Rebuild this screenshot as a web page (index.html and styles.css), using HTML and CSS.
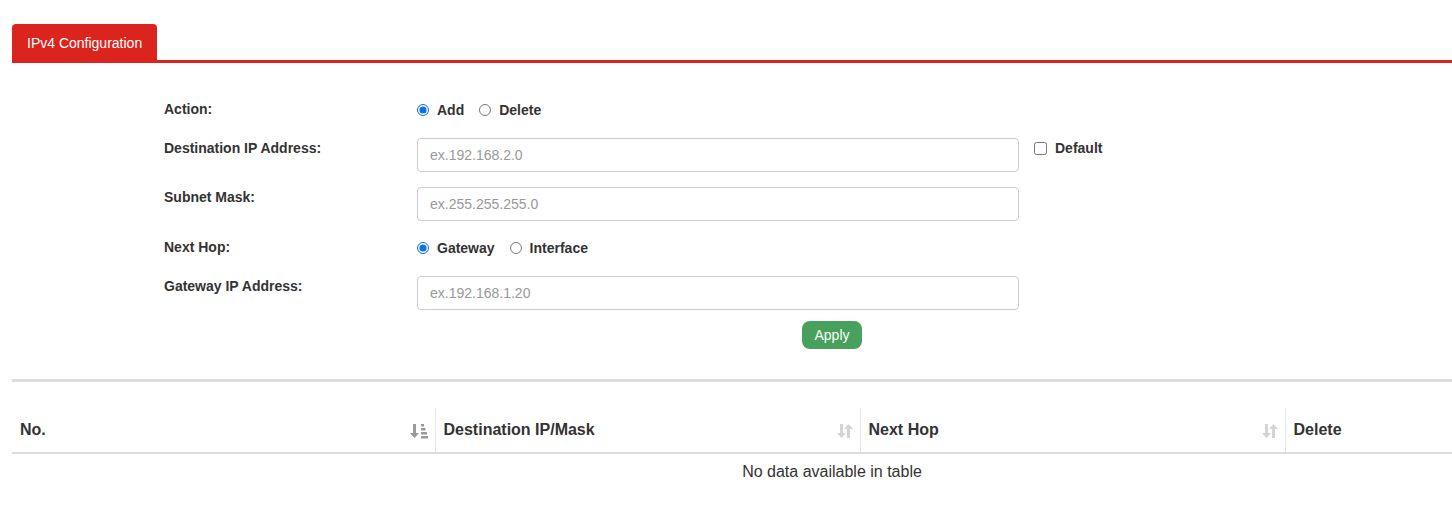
FILE: index.html
```html
<!DOCTYPE html>
<html lang="en">
<head>
    <meta charset="UTF-8">
    <meta name="viewport" content="width=device-width, initial-scale=1.0">
    <title>Static Routing</title>
    <link rel="stylesheet" href="styles.css">
</head>
<body>

<div class="viewport">
<div class="page">

    <div class="tabs">
        <div class="tab active">IPv4 Configuration</div>
    </div>

    <div class="route-form">
        <div class="form-row radio-row">
            <label class="field-label">Action:</label>
            <div class="field">
                <label class="opt"><input type="radio" name="action" checked> Add</label>
                <label class="opt"><input type="radio" name="action"> Delete</label>
            </div>
        </div>

        <div class="form-row">
            <label class="field-label" for="dstip">Destination IP Address:</label>
            <div class="field">
                <input type="text" id="dstip" class="text-input" placeholder="ex.192.168.2.0">
                <label class="opt check"><input type="checkbox" id="isdefault"> Default</label>
            </div>
        </div>

        <div class="form-row">
            <label class="field-label" for="mask">Subnet Mask:</label>
            <div class="field">
                <input type="text" id="mask" class="text-input" placeholder="ex.255.255.255.0">
            </div>
        </div>

        <div class="form-row radio-row">
            <label class="field-label">Next Hop:</label>
            <div class="field">
                <label class="opt"><input type="radio" name="hop" checked> Gateway</label>
                <label class="opt"><input type="radio" name="hop"> Interface</label>
            </div>
        </div>

        <div class="form-row">
            <label class="field-label" for="gw">Gateway IP Address:</label>
            <div class="field">
                <input type="text" id="gw" class="text-input" placeholder="ex.192.168.1.20">
            </div>
        </div>
    </div>

    <div class="actions">
        <button class="btn-apply">Apply</button>
    </div>

    <hr class="divider">

    <table class="route-table">
        <colgroup>
            <col class="w-no">
            <col class="w-dst">
            <col class="w-hop">
            <col class="w-del">
        </colgroup>
        <thead>
            <tr>
                <th>No.
                    <svg class="sort" width="18" height="16" viewBox="0 0 18 16">
                        <path d="M3 1h3v9h3l-4.5 5L0 10h3z" fill="#9a9a9a"/>
                        <rect x="11" y="1" width="3" height="2.5" fill="#9a9a9a"/>
                        <rect x="11" y="5" width="4.5" height="2.5" fill="#9a9a9a"/>
                        <rect x="11" y="9" width="6" height="2.5" fill="#9a9a9a"/>
                        <rect x="11" y="13" width="7" height="2.5" fill="#9a9a9a"/>
                    </svg>
                </th>
                <th>Destination IP/Mask
                    <svg class="sort" width="16" height="16" viewBox="0 0 16 16">
                        <path d="M3 1h3v9h3l-4.5 5L0 10h3z" fill="#d4d4d4"/>
                        <path d="M10 15h3V6h3L11.5 1 7 6h3z" fill="#d4d4d4"/>
                    </svg>
                </th>
                <th>Next Hop
                    <svg class="sort" width="16" height="16" viewBox="0 0 16 16">
                        <path d="M3 1h3v9h3l-4.5 5L0 10h3z" fill="#d4d4d4"/>
                        <path d="M10 15h3V6h3L11.5 1 7 6h3z" fill="#d4d4d4"/>
                    </svg>
                </th>
                <th>Delete</th>
            </tr>
        </thead>
        <tbody>
            <tr>
                <td colspan="4" class="empty">No data available in table</td>
            </tr>
        </tbody>
    </table>

</div>
</div>

</body>
</html>
```

FILE: styles.css
```css
body {
    font-family: "Liberation Sans", Arial, sans-serif;
    background-color: #fff;
    color: #333;
    margin: 0;
    padding: 0;
}
.viewport {
    width: 100%;
    overflow: hidden;
}
.page {
    width: 1640px;
    padding: 24px 12px 0 12px;
}
.tabs {
    display: flex;
    border-bottom: 3px solid #db241e;
}
.tab {
    height: 36px;
    line-height: 38px;
    padding: 0 15px;
    font-size: 14px;
    color: #fff;
    background-color: #db241e;
    border-radius: 4px 4px 0 0;
}
.route-form {
    padding: 35px 0 0 152px;
}
.form-row {
    display: flex;
    margin-bottom: 15px;
}
.radio-row {
    height: 24px;
    align-items: center;
    margin-bottom: 16px;
}
.field-label {
    width: 253px;
    font-size: 14px;
    font-weight: bold;
    color: #333;
    padding-top: 2px;
}
.radio-row .field-label {
    padding-top: 0;
    margin-top: -3px;
}
.field {
    display: flex;
    align-items: flex-start;
}
.radio-row .field {
    align-items: center;
}
.opt {
    display: flex;
    align-items: center;
    font-size: 14px;
    font-weight: bold;
    color: #333;
    margin-right: 15px;
}
.opt input {
    width: 12px;
    height: 12px;
    margin: 0 8px 0 0;
    accent-color: #0b72e7;
}
.check {
    margin-left: 15px;
    margin-top: 2px;
}
.check input {
    width: 13px;
    height: 13px;
}
.text-input {
    width: 602px;
    height: 34px;
    box-sizing: border-box;
    padding: 0 12px;
    border: 1px solid #ccc;
    border-radius: 4px;
    font-family: "Liberation Sans", Arial, sans-serif;
    font-size: 14px;
    color: #333;
}
.text-input::placeholder {
    color: #999;
}
.actions {
    display: flex;
    justify-content: center;
    margin-top: -4px;
}
.btn-apply {
    width: 60px;
    height: 28px;
    padding: 0;
    background-color: #47a05b;
    color: #fff;
    border: none;
    border-radius: 8px;
    font-family: "Liberation Sans", Arial, sans-serif;
    font-size: 14px;
    cursor: pointer;
}
.divider {
    border: none;
    height: 3px;
    background-color: #ddd;
    margin: 30px 0 0 0;
}
.route-table {
    width: 1640px;
    border-collapse: collapse;
    margin-top: 26px;
    table-layout: fixed;
}
.w-no { width: 423px; }
.w-dst { width: 425px; }
.w-hop { width: 425px; }
.w-del { width: 367px; }
th {
    position: relative;
    height: 44px;
    padding: 0 8px;
    text-align: left;
    font-size: 16px;
    font-weight: bold;
    color: #333;
    border-bottom: 2px solid #ddd;
    border-right: 1px solid #e8e8e8;
}
th:last-child {
    border-right: none;
}
.sort {
    position: absolute;
    right: 7px;
    top: 15px;
}
.empty {
    text-align: center;
    font-size: 16px;
    color: #333;
    padding: 9px 0;
}
```
